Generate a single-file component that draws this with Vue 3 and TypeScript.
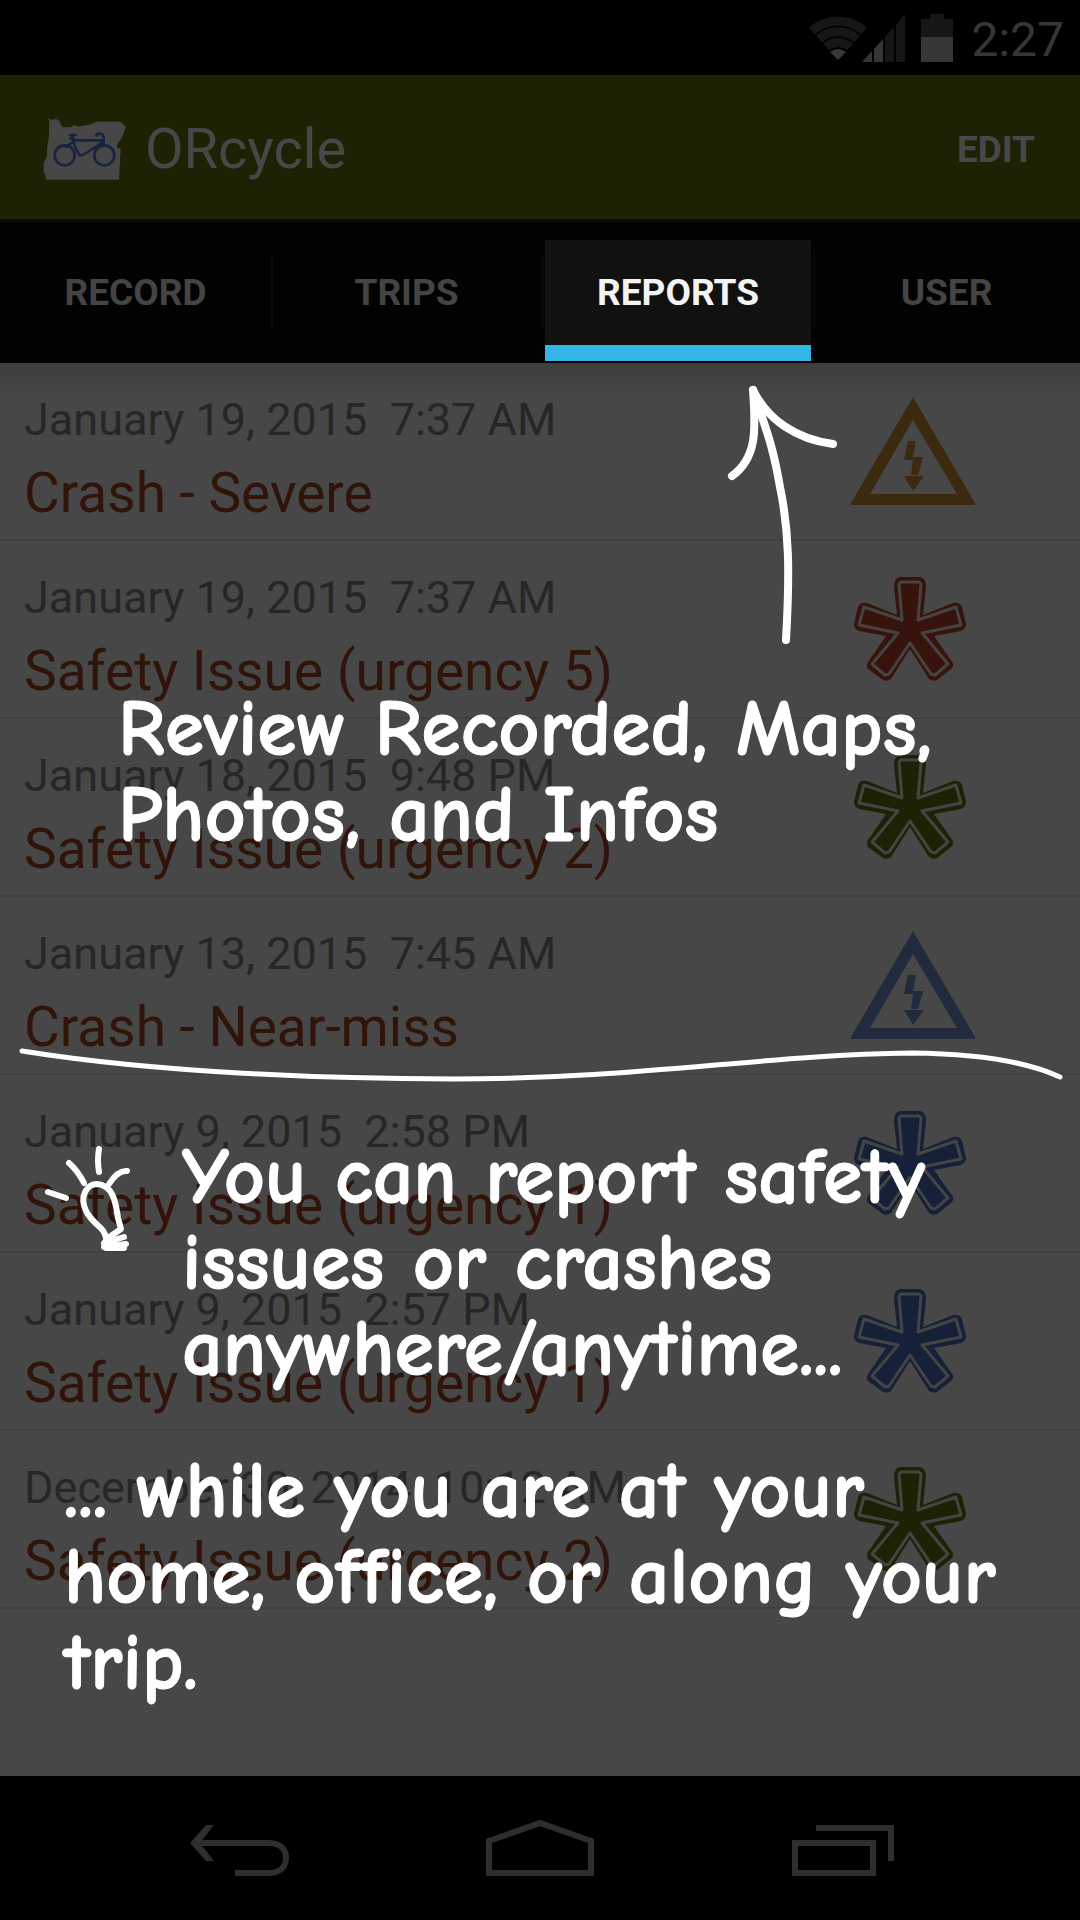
<script setup lang="ts">
type Kind = 'crash' | 'issue'

interface Report {
  date: string
  title: string
  kind: Kind
  color: string
}

const tabs: string[] = ['RECORD', 'TRIPS', 'REPORTS', 'USER']
const activeTab = 'REPORTS'

const reports: Report[] = [
  { date: 'January 19, 2015  7:37 AM', title: 'Crash - Severe', kind: 'crash', color: '#3b2a10' },
  { date: 'January 19, 2015  7:37 AM', title: 'Safety Issue (urgency 5)', kind: 'issue', color: '#38130c' },
  { date: 'January 18, 2015  9:48 PM', title: 'Safety Issue (urgency 2)', kind: 'issue', color: '#1e2204' },
  { date: 'January 13, 2015  7:45 AM', title: 'Crash - Near-miss', kind: 'crash', color: '#222a3e' },
  { date: 'January 9, 2015  2:58 PM', title: 'Safety Issue (urgency 1)', kind: 'issue', color: '#162038' },
  { date: 'January 9, 2015  2:57 PM', title: 'Safety Issue (urgency 1)', kind: 'issue', color: '#162038' },
  { date: 'December 30, 2014  10:12 AM', title: 'Safety Issue (urgency 2)', kind: 'issue', color: '#1e2204' },
]
</script>

<template>
  <div class="screen">
    <div class="status">
      <svg class="status-icons" width="144" height="50" viewBox="809 12 144 50" aria-hidden="true">
        <g fill="none" stroke="#161616" stroke-width="9">
          <path d="M812 30A39 39 0 0 1 864 30" />
          <path d="M819 38A28.500 28.500 0 0 1 857 38" />
          <path d="M826 46A18 18 0 0 1 850 46" />
        </g>
        <path d="M838 59L830 51Q838 45 846 51Z" fill="#363636" />
        <path d="M862 61L872 50V61ZM874 61V48L883 38V61Z" fill="#363636" />
        <path d="M885 61V36L894 26V61ZM896 61V24L905 13V61Z" fill="#161616" />
        <path d="M921 36V18H930V13H944V18H953V36Z" fill="#161616" />
        <path d="M921 36H953V61H921Z" fill="#363636" />
      </svg>
      <time>2:27</time>
    </div>

    <header class="bar">
      <svg class="logo" width="84" height="64" viewBox="130 142 252 192" aria-hidden="true">
        <path
          fill="#474747"
          d="M146 144L156 152L166 147L178 152L188 173L212 173L225 166L236 171L250 168L268 165L290 156L362 156L379 172L370 195L362 212L352 225L352 234L363 237L358 330L140 330L137 315L132 305L132 280L142 258L143 230L148 200L149 160Z"
        />
        <g fill="none" stroke="#18233d" stroke-width="8" stroke-linejoin="round" stroke-linecap="round">
          <circle cx="195" cy="257" r="30" />
          <circle cx="314" cy="257" r="30" />
          <path d="M218 200L226 232L240 257L250 256L306 220M224 212H304M226 213L198 232" />
          <path d="M290 198Q290 192 300 192Q312 194 312 205V228M306 214V228" />
          <path d="M211 196H228M212 206H222" />
        </g>
      </svg>
      <h1>ORcycle</h1>
      <button class="edit" type="button">EDIT</button>
    </header>

    <nav class="tabs" aria-label="Sections">
      <button
        v-for="tab in tabs"
        :key="tab"
        class="tab"
        :class="{ active: tab === activeTab }"
        type="button"
      >
        <span>{{ tab }}</span>
      </button>
    </nav>

    <main class="list">
      <article v-for="(report, i) in reports" :key="i" class="row">
        <div class="info">
          <p class="date">{{ report.date }}</p>
          <h2>{{ report.title }}</h2>
        </div>
        <svg width="124" height="108" viewBox="0 0 124 108" :fill="report.color" aria-hidden="true">
          <g v-if="report.kind === 'crash'">
            <path fill-rule="evenodd" d="M62 0L124 106V108H0V106ZM62 23L19 97H106Z" />
            <path d="M57 44H65L62 60H72L67 78H60L62 63H53ZM53 79H73L62 94Z" />
          </g>
          <g v-else>
            <path
              d="M49 2H69Q75 3 75 12L72 40L102 28Q109 27 111 32L115 49Q115 54 110 56L83 61L102 88Q103 91 100 94L86 105Q82 107 78 104L59 74L40 104Q36 107 32 105L17 94Q15 91 17 87L35 61L8 56Q3 54 3 49L7 32Q9 27 16 28L46 40L43 12Q43 3 49 2Z"
            />
            <path
              fill="none"
              stroke="#444"
              stroke-width="3"
              stroke-linejoin="round"
              d="M50 7H68L70 9L67 45L105 32L110 50L71 58L97 89L84 100L80 99L59 68L38 99L34 100L21 89L47 58L8 50L13 32L51 45L48 9Z"
            />
          </g>
        </svg>
      </article>
    </main>

    <nav class="system" aria-label="System">
      <button type="button" aria-label="Back">
        <svg width="108" height="58" viewBox="0 0 108 58" fill="none" stroke="#2e2e2c" stroke-width="6">
          <path d="M51 54H84C96 54 102 48 102 39S96 24 84 24H12" />
          <path fill="#2e2e2c" stroke="none" d="M22 6H30L16 24L30 42H22L6 24Z" />
        </svg>
      </button>
      <button type="button" aria-label="Home">
        <svg width="108" height="58" viewBox="0 0 108 58" fill="none" stroke="#2e2e2c" stroke-width="6">
          <path d="M3 54V22L54 4L105 22V54Z" />
        </svg>
      </button>
      <button type="button" aria-label="Recent apps">
        <svg width="108" height="58" viewBox="0 0 108 58" fill="none" stroke="#2e2e2c" stroke-width="6">
          <path d="M7 24H85V54H7ZM28 9H103V42" />
        </svg>
      </button>
    </nav>

    <section class="coach" aria-label="Tips">
      <svg class="strokes" viewBox="0 0 1080 1920" fill="none" stroke="#fff" stroke-linecap="round" stroke-linejoin="round" aria-hidden="true">
        <g stroke-width="8">
          <path d="M786 640C790 570 789 530 780 487C772 440 764 425 753 390" />
          <path d="M753 390C756 430 757 458 732 476" />
          <path d="M753 390C768 420 796 439 833 444" />
        </g>
        <path stroke-width="5" d="M22 1051C160 1073 330 1079 453 1079C640 1079 760 1055 912 1053Q1010 1054 1060 1077" />
        <g stroke-width="6">
          <path d="M48 1192L66 1198M69 1163Q78 1171 84 1183M99 1149Q97 1160 99 1172M127 1171Q118 1170 109 1184" />
          <path d="M106 1238C104 1226 94 1226 86 1211C79 1196 87 1184 97 1184C114 1185 116 1205 118 1218L121 1229L108 1238L104 1243L124 1237M104 1247L126 1244M106 1248H124" />
        </g>
      </svg>
      <p class="tip first">Review Recorded, Maps,<br />Photos, and Infos</p>
      <p class="tip second">You can report safety<br />issues or crashes<br />anywhere/anytime...</p>
      <p class="tip third">... while you are at your<br />home, office, or along your<br />trip.</p>
    </section>
  </div>
</template>

<style>
body {
  margin: 0;
  background: #474747;
}
</style>

<style scoped>
.screen {
  position: relative;
  display: flex;
  flex-direction: column;
  min-height: 100vh;
  background: #474747;
  font-family: Roboto, "Noto Sans", sans-serif;
  overflow: hidden;
}

h1,
h2,
p {
  margin: 0;
  font-weight: 400;
}

button {
  margin: 0;
  padding: 0;
  border: 0;
  background: none;
  color: inherit;
  font: inherit;
}

svg {
  display: block;
  flex: none;
}

.status {
  display: flex;
  align-items: center;
  justify-content: flex-end;
  gap: 18px;
  height: 75px;
  padding-right: 16px;
  background: #000;
  color: #363636;
  font-size: 48px;
}

.status time {
  padding-top: 4px;
}

.bar {
  box-sizing: border-box;
  display: flex;
  align-items: center;
  height: 144px;
  padding: 4px 45px 0 43px;
  background: #1e2204;
  color: #474747;
}

.bar h1 {
  flex: 1;
  margin-left: 18px;
  font-size: 56px;
}

.edit {
  font-size: 37px;
  font-weight: 700;
}

.tabs {
  display: grid;
  grid-template-columns: 271fr 271fr 271fr 267fr;
  height: 141px;
  border-top: 3px solid #0a0a0a;
  background: #020202;
  color: #444;
}

.tab {
  position: relative;
  font-size: 37px;
  font-weight: 700;
}

.tab + .tab::before {
  content: "";
  position: absolute;
  left: 0;
  top: 33px;
  width: 2px;
  height: 72px;
  background: #0a0a0a;
}

.tab span {
  display: flex;
  align-items: center;
  justify-content: center;
  height: 141px;
}

.tab.active {
  padding: 18px 2px 2px 3px;
  color: #f3f3f3;
}

.tab.active span {
  box-sizing: border-box;
  height: 121px;
  border-bottom: 16px solid #33b5e5;
  background: #111;
}

.list {
  flex: 1;
  background: linear-gradient(#3e3e3c, #474747 36px);
}

.row {
  box-sizing: border-box;
  display: flex;
  align-items: flex-start;
  height: 178px;
  padding: 34px 105px 0 24px;
  border-bottom: 2px solid #404040;
}

.info {
  flex: 1;
  margin-top: -4px;
  white-space: pre;
}

.date {
  color: #262626;
  font-size: 45px;
  line-height: 54px;
}

.row h2 {
  margin-top: 14px;
  color: #30140a;
  font-size: 55px;
  line-height: 64px;
}

.system {
  display: flex;
  justify-content: center;
  height: 144px;
  padding: 0 8%;
  background: #000;
}

.system button {
  flex: 1;
  display: flex;
  align-items: center;
  justify-content: center;
}

.coach {
  position: absolute;
  inset: 0;
  pointer-events: none;
  color: #fff;
}

.strokes {
  position: absolute;
  inset: 0;
  width: 100%;
}

.tip {
  position: absolute;
  font-family: "Chalkboard", "Comic Neue", "DejaVu Sans", sans-serif;
  font-size: 80px;
  font-weight: 700;
  font-variant-ligatures: none;
  line-height: 86px;
  -webkit-text-stroke: 1px #fff;
  white-space: nowrap;
}

.first {
  left: 118px;
  top: 686px;
}

.second {
  left: 182px;
  top: 1134px;
}

.third {
  left: 64px;
  top: 1448px;
}
</style>
